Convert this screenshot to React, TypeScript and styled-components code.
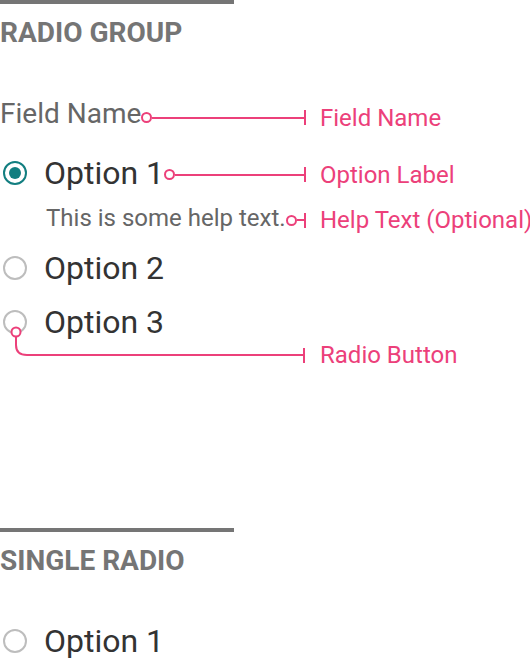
import React from "react";
import styled, { createGlobalStyle } from "styled-components";

const PINK = "#EC407A";
const TEAL = "#127E80";
const GRAY = "#757575";

const Global = createGlobalStyle`
  html, body { margin: 0; padding: 0; background: #fff; }
  body { font-family: Roboto, "Noto Sans", sans-serif; }
`;

const Page = styled.div`
  width: 530px;
  display: flex;
  flex-direction: column;
`;

const Section = styled.section<{ $gap?: number }>`
  display: flex;
  flex-direction: column;
  margin-top: ${(p) => p.$gap ?? 0}px;
`;

const Bar = styled.div`
  width: 234px;
  height: 4px;
  background: ${GRAY};
`;

const Title = styled.h2`
  margin: 12px 0 0;
  font: 700 28px/34px Roboto, sans-serif;
  color: ${GRAY};
`;

const AnnRow = styled.div<{ $mt?: number }>`
  display: grid;
  grid-template-columns: 306px 1fr;
  align-items: center;
  margin-top: ${(p) => p.$mt ?? 0}px;
`;

const Lead = styled.div<{ $indent?: number }>`
  display: flex;
  align-items: center;
  padding-left: ${(p) => p.$indent ?? 0}px;
`;

const FieldName = styled.span`
  font: 400 28px/34px Roboto, sans-serif;
  color: #666;
  white-space: nowrap;
`;

const OptionText = styled.span`
  font: 400 32px/38px Roboto, sans-serif;
  color: #333;
  white-space: nowrap;
`;

const Help = styled.span`
  font: 400 24px/28px Roboto, sans-serif;
  color: #666;
  white-space: nowrap;
`;

const Radio = styled.span<{ $checked?: boolean }>`
  box-sizing: border-box;
  flex: none;
  width: 24px;
  height: 24px;
  margin: 0 17px 0 3px;
  border-radius: 50%;
  border: 2px solid ${(p) => (p.$checked ? TEAL : "#BDBDBD")};
  display: flex;
  align-items: center;
  justify-content: center;
  &::after {
    content: "";
    width: 12px;
    height: 12px;
    border-radius: 50%;
    background: ${(p) => (p.$checked ? TEAL : "transparent")};
  }
`;

const Connector = styled.span<{ $drop?: number }>`
  flex: 1;
  display: flex;
  align-items: center;
  min-width: 0;
  margin-top: ${(p) => p.$drop ?? 0}px;
`;

const Dot = styled.span`
  box-sizing: border-box;
  flex: none;
  width: 11px;
  height: 11px;
  border-radius: 50%;
  border: 2px solid ${PINK};
  background: #fff;
`;

const Line = styled.span`
  flex: 1;
  height: 2px;
  background: ${PINK};
`;

const Tick = styled.span`
  flex: none;
  width: 2px;
  height: 15px;
  background: ${PINK};
`;

const Label = styled.span<{ $drop?: number }>`
  font: 400 24px/28px Roboto, sans-serif;
  color: ${PINK};
  padding-left: 14px;
  margin-top: ${(p) => p.$drop ?? 0}px;
  white-space: nowrap;
`;

const CurveSvg = styled.svg`
  display: block;
  overflow: visible;
`;

const OptionRow = styled.div<{ $mt?: number }>`
  display: flex;
  align-items: center;
  margin-top: ${(p) => p.$mt ?? 0}px;
`;

function Pointer({ drop = 0 }: { drop?: number }) {
  return (
    <Connector $drop={drop}>
      <Dot />
      <Line />
      <Tick />
    </Connector>
  );
}

export default function App() {
  return (
    <Page>
      <Global />
      <Section>
        <Bar />
        <Title>RADIO GROUP</Title>
        <AnnRow $mt={46}>
          <Lead>
            <FieldName>Field Name</FieldName>
            <Pointer drop={7} />
          </Lead>
          <Label $drop={8}>Field Name</Label>
        </AnnRow>
        <AnnRow $mt={22}>
          <Lead>
            <Radio $checked />
            <OptionText>Option 1</OptionText>
            <Pointer drop={3} />
          </Lead>
          <Label $drop={3}>Option Label</Label>
        </AnnRow>
        <AnnRow $mt={10}>
          <Lead $indent={46}>
            <Help>This is some help text.</Help>
            <Pointer drop={4} />
          </Lead>
          <Label $drop={4}>Help Text (Optional)</Label>
        </AnnRow>
        <OptionRow $mt={15}>
          <Radio />
          <OptionText>Option 2</OptionText>
        </OptionRow>
        <OptionRow $mt={16}>
          <Radio />
          <OptionText>Option 3</OptionText>
        </OptionRow>
        <AnnRow>
          <Lead>
            <CurveSvg width="306" height="14" viewBox="0 0 306 14">
              <path
                d="M16 -11 V-3 Q16 7 27 7 H304"
                fill="none"
                stroke={PINK}
                strokeWidth="2"
              />
              <line x1="304" y1="0" x2="304" y2="15" stroke={PINK} strokeWidth="2" />
              <circle cx="16" cy="-16" r="4.5" fill="#fff" stroke={PINK} strokeWidth="2" />
            </CurveSvg>
          </Lead>
          <Label>Radio Button</Label>
        </AnnRow>
      </Section>
      <Section $gap={159}>
        <Bar />
        <Title>SINGLE RADIO</Title>
        <OptionRow $mt={44}>
          <Radio />
          <OptionText>Option 1</OptionText>
        </OptionRow>
      </Section>
    </Page>
  );
}
